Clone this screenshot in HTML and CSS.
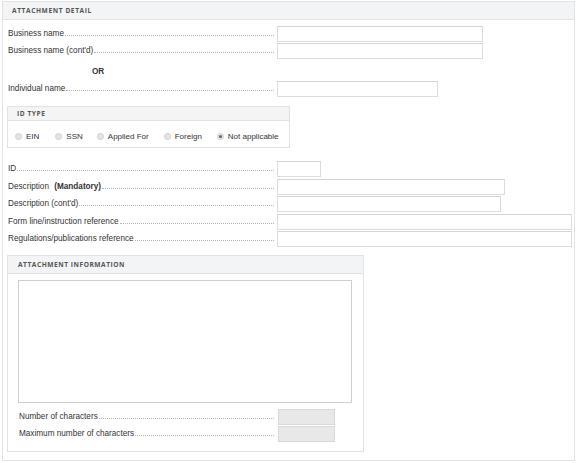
FILE: index.html
```html
<!DOCTYPE html>
<html>
<head>
<meta charset="utf-8">
<link rel="stylesheet" href="styles.css">
</head>
<body>
<div class="panel">
  <div class="panel-head">ATTACHMENT DETAIL</div>
  <div class="panel-body">
    <div class="rows">
      <div class="row"><div class="label"><span>Business name</span><span class="dots"></span></div><div class="field w206"></div></div>
      <div class="row"><div class="label"><span>Business name (cont'd)</span><span class="dots"></span></div><div class="field w206"></div></div>
    </div>
    <div class="or">OR</div>
    <div class="rows">
      <div class="row"><div class="label"><span>Individual name</span><span class="dots"></span></div><div class="field w161"></div></div>
    </div>
    <div class="box idtype">
      <div class="box-head small">ID TYPE</div>
      <div class="radios">
        <label class="radio"><span class="dot"></span>EIN</label>
        <label class="radio"><span class="dot"></span>SSN</label>
        <label class="radio"><span class="dot"></span>Applied For</label>
        <label class="radio"><span class="dot"></span>Foreign</label>
        <label class="radio"><span class="dot on"></span>Not applicable</label>
      </div>
    </div>
    <div class="rows rows2">
      <div class="row"><div class="label"><span>ID</span><span class="dots"></span></div><div class="field w44"></div></div>
      <div class="row"><div class="label"><span>Description <b class="mand">(Mandatory)</b></span><span class="dots"></span></div><div class="field w228"></div></div>
      <div class="row"><div class="label"><span>Description (cont'd)</span><span class="dots"></span></div><div class="field w224"></div></div>
      <div class="row"><div class="label"><span>Form line/instruction reference</span><span class="dots"></span></div><div class="field w295"></div></div>
      <div class="row"><div class="label"><span>Regulations/publications reference</span><span class="dots"></span></div><div class="field w295"></div></div>
    </div>
    <div class="box info">
      <div class="box-head">ATTACHMENT INFORMATION</div>
      <div class="info-body">
        <div class="textarea"></div>
        <div class="rows rows3">
          <div class="row row3"><div class="label"><span>Number of characters</span><span class="dots"></span></div><div class="field ro"></div></div>
          <div class="row row3"><div class="label"><span>Maximum number of characters</span><span class="dots"></span></div><div class="field ro"></div></div>
        </div>
      </div>
    </div>
  </div>
</div>
</body>
</html>
```
FILE: styles.css
```css
* { box-sizing: border-box; }
body {
  margin: 0;
  background: #fff;
  font-family: "Liberation Sans", Arial, sans-serif;
  font-size: 8px;
  color: #333;
}
.panel {
  margin: 1px 0 0 2px;
  width: 573px;
  height: 460px;
  border: 1px solid #e3e3e3;
}
.panel-head {
  height: 18px;
  background: #f3f4f6;
  border-bottom: 1px solid #e3e3e3;
  font-family: "Open Sans", sans-serif;
  font-weight: 700;
  font-size: 6.6px;
  letter-spacing: 0.6px;
  color: #555;
  padding-left: 9px;
  line-height: 18px;
}
.panel-body {
  padding: 6px 2px 0 4px;
}
.rows {
  display: flex;
  flex-direction: column;
  gap: 1px;
}
.rows2 { gap: 1.5px; margin-top: 13px; }
.row {
  display: flex;
  align-items: center;
  height: 16px;
}
.label {
  width: 270px;
  display: flex;
  align-items: baseline;
  padding-left: 1px;
  padding-right: 3px;
  white-space: nowrap;
  line-height: 10px;
  font-size: 8.2px;
}
.dots {
  flex: 1;
  border-bottom: 1px dotted #b5b5b5;
  margin-left: 1px;
  height: 6px;
}
.mand { margin-left: 3px; font-weight: 700; color: #333; }
.field {
  height: 16px;
  border: 1px solid #dcdcdc;
  border-top-color: #d4d4d4;
  background: #fff;
}
.w206 { width: 206px; }
.w161 { width: 161px; }
.w44 { width: 44px; }
.w228 { width: 228px; }
.w224 { width: 224px; }
.w295 { width: 295px; }
.or {
  height: 22px;
  padding-left: 85px;
  padding-top: 8px;
  font-weight: 700;
  font-size: 8.2px;
  color: #333;
}
.box {
  border: 1px solid #e3e3e3;
}
.box-head {
  background: #f3f4f6;
  border-bottom: 1px solid #e3e3e3;
  font-family: "Open Sans", sans-serif;
  font-weight: 700;
  font-size: 6.6px;
  letter-spacing: 0.55px;
  color: #555;
  height: 18px;
  line-height: 18px;
  padding-left: 10px;
}
.box-head.small { height: 14px; line-height: 14px; padding-left: 9px; }
.idtype {
  margin-top: 9px;
  width: 283px;
  height: 42px;
}
.radios {
  display: flex;
  align-items: center;
  height: 27px;
  padding-top: 3px;
  padding-left: 7px;
  white-space: nowrap;
}
.radio {
  display: flex;
  align-items: center;
  flex-shrink: 0;
  margin-right: 16px;
  color: #333;
  font-size: 8px;
}
.radio:nth-child(2) { margin-right: 14px; }
.radio:nth-child(3) { margin-right: 15px; }
.radio:nth-child(4) { margin-right: 15px; }
.radio:last-child { margin-right: 0; }
.dot {
  flex-shrink: 0;
  width: 7px;
  height: 7px;
  border-radius: 50%;
  background: #e4e4e4;
  border: 1px solid #d0d0d0;
  margin-right: 4px;
  position: relative;
}
.dot.on::after {
  content: "";
  position: absolute;
  left: 1px;
  top: 1px;
  width: 3px;
  height: 3px;
  border-radius: 50%;
  background: #666;
}
.info {
  margin-top: 8px;
  width: 357px;
  height: 197px;
}
.info-body {
  padding: 6px 11px 0 10px;
}
.textarea {
  width: 334px;
  height: 123px;
  border: 1px solid #cfcfcf;
  background: #fff;
}
.rows3 { margin-top: 6px; }
.row3 .label { width: 260px; padding-right: 4px; }
.field.ro {
  width: 57px;
  background: #e8e8e8;
  border-color: #d8d8d8;
}
```
